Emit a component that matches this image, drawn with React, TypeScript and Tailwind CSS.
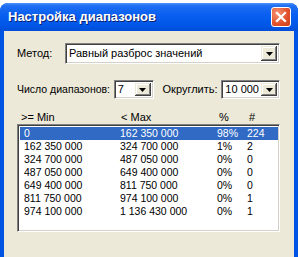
import React from "react";

const sunken =
  "border border-t-[#808080] border-l-[#808080] border-b-white border-r-white shadow-[inset_1px_1px_0_#404040,inset_-1px_-1px_0_#d4d0c8]";
const raised =
  "bg-[#ece9d8] shadow-[inset_-1px_-1px_0_#404040,inset_1px_1px_0_#ece9d8,inset_-2px_-2px_0_#808080,inset_2px_2px_0_#ffffff]";

function Arrow() {
  return (
    <svg width="7" height="4" viewBox="0 0 7 4">
      <path d="M0 0H7L3.5 4Z" fill="#000" />
    </svg>
  );
}

function Combo({ value, className }: { value: string; className: string }) {
  return (
    <div className={`${sunken} bg-white flex items-center ${className}`}>
      <div className="flex-1 pl-[3px] text-black leading-none whitespace-nowrap overflow-hidden">{value}</div>
      <div className={`${raised} w-[16px] self-stretch m-[2px] flex items-center justify-center`}>
        <Arrow />
      </div>
    </div>
  );
}

const rows = [
  ["0", "162 350 000", "98%", "224"],
  ["162 350 000", "324 700 000", "1%", "2"],
  ["324 700 000", "487 050 000", "0%", "0"],
  ["487 050 000", "649 400 000", "0%", "0"],
  ["649 400 000", "811 750 000", "0%", "0"],
  ["811 750 000", "974 100 000", "0%", "1"],
  ["974 100 000", "1 136 430 000", "0%", "1"],
];

export default function App() {
  return (
    <div
      className="w-[299px] h-[257px] bg-white overflow-hidden text-[11px] text-black"
      style={{ fontFamily: '"Liberation Sans", Arial, sans-serif' }}
    >
      <div className="mt-[3px] w-[298px] h-[254px] rounded-t-[8px] bg-[#0054e3] flex flex-col overflow-hidden">
        <div className="h-[28px] flex-none flex items-center pl-[8px] pr-[7px] bg-[linear-gradient(#4a95fa_0%,#1f6ef2_10%,#0a60f0_40%,#0058ea_75%,#004ed8_100%)]">
          <div className="flex-1 text-white font-bold text-[13px] [text-shadow:1px_1px_0_#0a1e6e]">
            Настройка диапазонов
          </div>
          <div className="w-[20px] h-[20px] rounded-[3px] border border-white bg-[radial-gradient(circle_at_30%_30%,#f59272,#e0502a_60%,#c8401c)] flex items-center justify-center">
            <svg width="12" height="12" viewBox="0 0 12 12">
              <path d="M2 2L10 10M10 2L2 10" stroke="#fff" strokeWidth="2.2" strokeLinecap="square" />
            </svg>
          </div>
        </div>
        <div className="flex-1 mx-[4px] bg-[#ece9d8] pt-[12px] pl-[13px] pr-[14px]">
          <div className="flex items-center h-[21px]">
            <div className="w-[48px]">Метод:</div>
            <Combo value="Равный разброс значений" className="flex-1 h-[21px]" />
          </div>
          <div className="flex items-center h-[19px] mt-[16px]">
            <div className="w-[97px] whitespace-nowrap text-[10.5px]">Число диапазонов:</div>
            <Combo value="7" className="w-[40px] h-[19px]" />
            <div className="w-[59px] ml-[9px] whitespace-nowrap">Округлить:</div>
            <Combo value="10 000" className="flex-1 h-[19px]" />
          </div>
          <div className="mt-[11px] h-[14px] grid grid-cols-[100px_98px_30px_1fr] pl-[4px] items-center leading-none">
            <div>&gt;= Min</div>
            <div>&lt; Max</div>
            <div>%</div>
            <div>#</div>
          </div>
          <div className={`${sunken} bg-white h-[108px] p-[2px] pr-[1px] text-[10.5px]`}>
            {rows.map((r, i) => (
              <div
                key={i}
                className={`h-[13px] grid grid-cols-[96px_97px_30px_1fr] pl-[4px] items-center leading-none ${
                  i === 0 ? "bg-[#316ac5] text-white" : ""
                }`}
              >
                <div>{r[0]}</div>
                <div>{r[1]}</div>
                <div>{r[2]}</div>
                <div>{r[3]}</div>
              </div>
            ))}
          </div>
        </div>
      </div>
    </div>
  );
}
